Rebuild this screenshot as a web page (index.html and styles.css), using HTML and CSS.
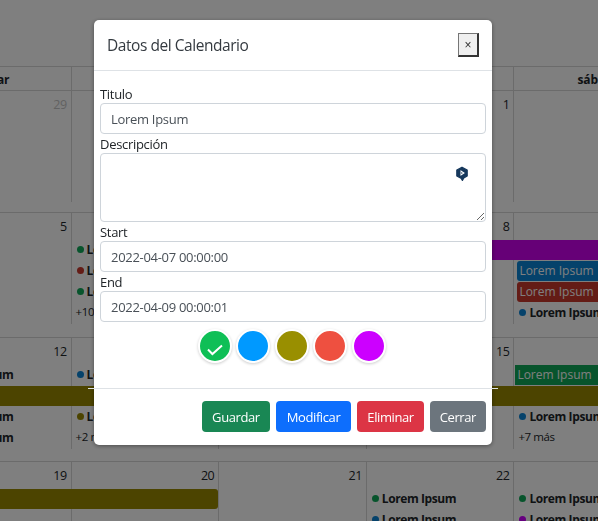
FILE: index.html
```html
<!DOCTYPE html>
<html>

<head>
    <title>Calendario</title>
    <link rel="stylesheet" href="styles.css">
</head>

<body>
    <div class="calendar">
        <div class="head">
            <div>mar</div>
            <div>mié</div>
            <div>jue</div>
            <div>vie</div>
            <div>sáb</div>
        </div>

        <div class="week week-first">
            <div class="day c1 muted">29</div>
            <div class="day c2 muted">30</div>
            <div class="day c3 muted">31</div>
            <div class="day c4">1</div>
            <div class="day c5"></div>
        </div>

        <div class="week">
            <div class="day c1">5</div>
            <div class="day c2">6</div>
            <div class="day c3">7</div>
            <div class="day c4">8</div>
            <div class="day c5"></div>

            <div class="ev c2 r1"><i class="dot green"></i>Lorem Ipsum</div>
            <div class="ev c2 r2"><i class="dot red"></i>Lorem Ipsum</div>
            <div class="ev c2 r3"><i class="dot green"></i>Lorem Ipsum</div>
            <div class="more c2 r4">+10 más</div>

            <div class="bar purple c3-5 r1 bar-open"></div>
            <div class="bar blue c5 r2">Lorem Ipsum</div>
            <div class="bar red c5 r3">Lorem Ipsum</div>
            <div class="ev c5 r4"><i class="dot blue"></i>Lorem Ipsum</div>
        </div>

        <div class="week week-third">
            <div class="day c1">12</div>
            <div class="day c2">13</div>
            <div class="day c3">14</div>
            <div class="day c4">15</div>
            <div class="day c5"></div>

            <div class="ev c1 r1"><i class="dot olive"></i>Lorem Ipsum</div>
            <div class="ev c2 r1"><i class="dot blue"></i>Lorem Ipsum</div>
            <div class="bar green c5 r1 bar-square">Lorem Ipsum</div>

            <div class="bar olive c1-5 r2 bar-open"></div>

            <div class="ev c1 r3"><i class="dot green"></i>Lorem Ipsum</div>
            <div class="ev c2 r3"><i class="dot olive"></i>Lorem Ipsum</div>
            <div class="ev c5 r3"><i class="dot blue"></i>Lorem Ipsum</div>

            <div class="ev c1 r4"><i class="dot green"></i>Lorem Ipsum</div>
            <div class="more c2 r4">+2 más</div>
            <div class="more c5 r4">+7 más</div>
        </div>

        <div class="week">
            <div class="day c1">19</div>
            <div class="day c2">20</div>
            <div class="day c3">21</div>
            <div class="day c4">22</div>
            <div class="day c5"></div>

            <div class="bar olive c1-2 r1"></div>
            <div class="ev c4 r1"><i class="dot green"></i>Lorem Ipsum</div>
            <div class="ev c5 r1"><i class="dot green"></i>Lorem Ipsum</div>
            <div class="ev c4 r2"><i class="dot blue"></i>Lorem Ipsum</div>
            <div class="ev c5 r2"><i class="dot purple"></i>Lorem Ipsum</div>
        </div>
    </div>

    <div class="backdrop"></div>

    <div class="modal">
        <div class="modal-header">
            <h5 class="modal-title">Datos del Calendario</h5>
            <button type="button" class="close-btn">×</button>
        </div>
        <form class="modal-body">
            <label class="field-label">Titulo</label>
            <input class="field" type="text" value="Lorem Ipsum">
            <label class="field-label">Descripción</label>
            <div class="area-wrap">
                <textarea class="field area"></textarea>
                <svg class="area-badge" width="16" height="18" viewBox="0 0 16 18">
                    <path d="M8 2.2 13.2 5V11L9.8 12.9 8.4 15.4 7.4 13.6 2.8 11V5Z" fill="#16385c" stroke="#16385c" stroke-width="1.2" stroke-linejoin="round"/>
                    <path d="M6.4 5.8 9.8 8 6.4 10.2" fill="none" stroke="#fff" stroke-width="1.2"/>
                    <path d="M6 8H7.6" stroke="#fff" stroke-width="1"/>
                </svg>
            </div>
            <label class="field-label">Start</label>
            <input class="field" type="text" value="2022-04-07 00:00:00">
            <label class="field-label">End</label>
            <input class="field" type="text" value="2022-04-09 00:00:01">

            <div class="swatches">
                <span class="swatch swatch-green">
                    <svg width="30" height="30" viewBox="0 0 30 30">
                        <path d="M8 18.5 12.4 23 22 14.5" fill="none" stroke="#fff" stroke-width="2"/>
                    </svg>
                </span>
                <span class="swatch swatch-blue"></span>
                <span class="swatch swatch-olive"></span>
                <span class="swatch swatch-red"></span>
                <span class="swatch swatch-purple"></span>
            </div>
            <hr class="rule">
            <div class="modal-footer">
                <button type="button" class="btn btn-success">Guardar</button>
                <button type="button" class="btn btn-primary">Modificar</button>
                <button type="button" class="btn btn-danger">Eliminar</button>
                <button type="button" class="btn btn-secondary">Cerrar</button>
            </div>
        </form>
    </div>
</body>

</html>
```

FILE: styles.css
```css
html,
body {
    height: 100%;
}

body {
    margin: 0;
    overflow: hidden;
    font-family: "Open Sans", "Noto Sans", sans-serif;
    font-size: 13px;
    color: #212529;
    background: #fff;
}

.calendar {
    width: 738px;
    margin-left: -76px;
    padding-top: 66px;
}

.head,
.week {
    display: grid;
    grid-template-columns: 147.6px 147.6px 147.6px 147.6px 147.6px;
}

.head {
    height: 23px;
    border-top: 1px solid #d6d6d6;
    border-bottom: 1px solid #d6d6d6;
}

.head div {
    font-size: 12px;
    font-weight: 700;
    letter-spacing: -0.2px;
    line-height: 25px;
    text-align: center;
    border-right: 1px solid #d6d6d6;
}

.week {
    grid-template-rows: 27px 21px 21px 21px 21px;
    height: 125px;
    box-sizing: border-box;
    border-bottom: 1px solid #d6d6d6;
}

.week-first {
    height: 122px;
}

.week-third {
    height: 124px;
}

.day {
    grid-row: 1 / 6;
    padding: 4px 4px 0 0;
    font-size: 12.5px;
    letter-spacing: -0.5px;
    line-height: 20px;
    text-align: right;
    border-right: 1px solid #d6d6d6;
}

.muted {
    color: #c4c4c4;
}

.c1 { grid-column: 1; }
.c2 { grid-column: 2; }
.c3 { grid-column: 3; }
.c4 { grid-column: 4; }
.c5 { grid-column: 5; }
.c1-2 { grid-column: 1 / 3; }
.c1-5 { grid-column: 1 / 6; }
.c3-5 { grid-column: 3 / 6; }

.r1 { grid-row: 2; }
.r2 { grid-row: 3; }
.r3 { grid-row: 4; }
.r4 { grid-row: 5; }

.ev {
    display: flex;
    align-items: center;
    padding: 0 0 2px 5px;
    font-size: 12px;
    font-weight: 700;
    letter-spacing: -0.4px;
    white-space: nowrap;
    overflow: hidden;
}

.dot {
    flex: none;
    width: 7px;
    height: 7px;
    margin-right: 3px;
    border-radius: 50%;
}

.dot.green { background: #0fa958; }
.dot.red { background: #c8382c; }
.dot.blue { background: #0a84d6; }
.dot.olive { background: #998800; }
.dot.purple { background: #c0f; }

.more {
    display: flex;
    align-items: center;
    padding: 0 0 5px 4px;
    font-size: 11.5px;
    letter-spacing: -0.4px;
}

.bar {
    height: 20px;
    margin: 0 1.5px 1px 3px;
    padding-left: 2px;
    font-size: 12px;
    line-height: 20px;
    color: #fff;
    border-radius: 3px;
}

.bar.purple { background: #c0e; }
.bar.blue { background: #0a84d6; }
.bar.red { background: #c8382c; }
.bar.green { background: #0fa958; }
.bar.olive { background: #998800; }

.bar-open {
    margin-left: 0;
    margin-right: 0;
    border-radius: 0;
}

.bar-square {
    margin-left: 1px;
    border-radius: 0;
}

.backdrop {
    position: fixed;
    inset: 0;
    background: rgba(0, 0, 0, 0.5);
}

.modal {
    position: fixed;
    top: 20px;
    left: 94px;
    width: 398px;
    height: 425px;
    box-sizing: border-box;
    background: #fff;
    border-radius: 5px;
    box-shadow: 0 1px 4px rgba(0, 0, 0, 0.4);
}

.modal-header {
    display: flex;
    align-items: center;
    justify-content: space-between;
    height: 51px;
    box-sizing: border-box;
    padding: 0 13px;
    border-bottom: 1px solid #dee2e6;
}

.modal-title {
    margin: 0;
    font-size: 15.5px;
    font-weight: 500;
    letter-spacing: -0.45px;
    color: #343a40;
}

.close-btn {
    width: 21px;
    height: 24px;
    padding: 0;
    font-size: 12px;
    color: #333;
    background: #efefef;
    border: 1px solid #767676;
    border-right: 2px solid #333;
    border-bottom: 2px solid #333;
}

.modal-body {
    padding: 13px 6px 0;
}

.field-label {
    display: block;
    height: 19px;
    font-size: 13px;
    letter-spacing: -0.3px;
    line-height: 21px;
}

.field {
    display: block;
    width: 100%;
    height: 31px;
    box-sizing: border-box;
    padding: 0 10px;
    font-family: inherit;
    font-size: 13px;
    letter-spacing: -0.3px;
    color: #495057;
    border: 1px solid #ced4da;
    border-radius: 4px;
}

.area-wrap {
    position: relative;
}

.area {
    height: 69px;
}

.area-badge {
    position: absolute;
    top: 12px;
    right: 16px;
}

.swatches {
    display: flex;
    justify-content: center;
    gap: 4.5px;
    margin-top: 7px;
    padding-right: 3px;
}

.swatch {
    width: 30px;
    height: 30px;
    border: 2px solid #fff;
    border-radius: 50%;
    box-shadow: 0 1px 3px rgba(0, 0, 0, 0.2);
}

.swatch-green { background: #0fbf56; }
.swatch-blue { background: #09f; }
.swatch-olive { background: #998f00; }
.swatch-red { background: #ee5040; }
.swatch-purple { background: #c0f; }

.rule {
    height: 1px;
    margin: 25px -12px 0;
    border: 0;
    background: #dee2e6;
}

.modal-footer {
    display: flex;
    justify-content: flex-end;
    gap: 6px;
    margin-top: 12px;
}

.btn {
    height: 31px;
    padding: 0 10px;
    font-family: inherit;
    font-size: 13px;
    letter-spacing: -0.4px;
    color: #fff;
    border: 0;
    border-radius: 4px;
}

.btn-success { background: #198754; }
.btn-primary { background: #0d6efd; padding: 0 11px; }
.btn-danger { background: #dc3545; }
.btn-secondary { background: #6c757d; }
```
